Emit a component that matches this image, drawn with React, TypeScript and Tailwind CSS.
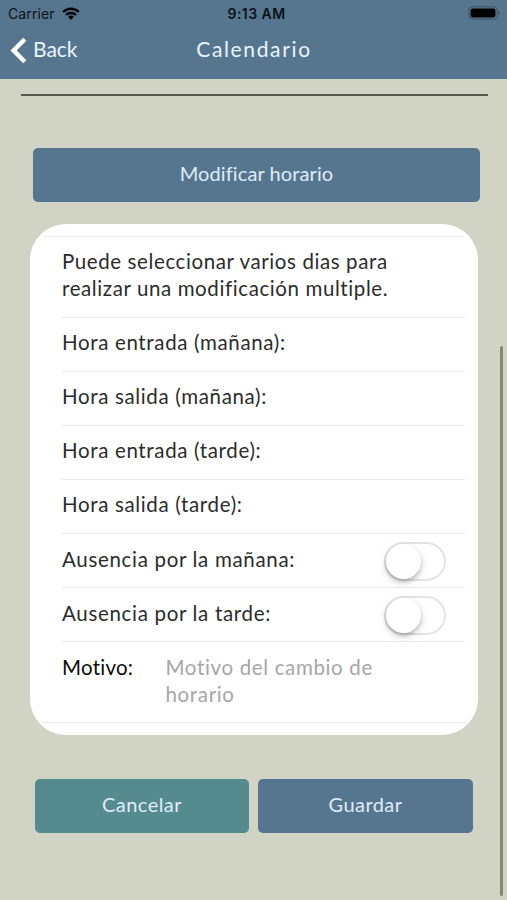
import { useState } from "react";

const timeRows = [
      "Hora entrada (mañana):",
      "Hora salida (mañana):",
      "Hora entrada (tarde):",
      "Hora salida (tarde):",
];

export default function App() {
      const [absentMorning, setAbsentMorning] = useState(false);
      const [absentEvening, setAbsentEvening] = useState(false);
      const [reason, setReason] = useState("");

      return (
            <div className="relative flex h-[900px] w-[507px] flex-col overflow-hidden bg-[#d1d4c5] font-['Lato',sans-serif] text-[20.5px] text-[#2c2c2c]">
                  <Header />

                  <main className="flex flex-col">
                        <div className="mt-[15px] mr-[19px] ml-[21px] h-[2px] bg-[#56574c]" />

                        <button className="mt-[52px] mr-[27px] ml-[33px] h-[54px] rounded-[5px] bg-[#567690] pb-[5px] text-[20px] tracking-[0.1px] text-[#dfecf8]">
                              Modificar horario
                        </button>

                        {/* Form card */}
                        <form className="mt-[22px] mr-[29px] ml-[30px] flex h-[511px] flex-col rounded-[36px] bg-white pt-3" onSubmit={(e) => e.preventDefault()}>
                              <div className="mr-[14px] ml-[14px] h-px bg-[#ededed]" />
                              <div className="mr-[13px] ml-8 flex flex-col">
                                    <p className="h-[81px] border-b border-[#e9e9e9] pt-[11px] leading-[27px] tracking-[0.6px]">
                                          Puede seleccionar varios dias para
                                          <br />
                                          realizar una modificación multiple.
                                    </p>
                                    {timeRows.map((label) => (
                                          <div key={label} className="h-[54px] border-b border-[#e9e9e9] pt-[11px] leading-[27px] tracking-[0.65px]">
                                                {label}
                                          </div>
                                    ))}
                                    <SwitchRow label="Ausencia por la mañana:" checked={absentMorning} onChange={setAbsentMorning} />
                                    <SwitchRow label="Ausencia por la tarde:" checked={absentEvening} onChange={setAbsentEvening} />
                                    <label className="flex h-[80px] pt-[12px] leading-[27px]">
                                          <span className="w-[103.5px] shrink-0 tracking-[0.25px] text-[#0c0c0c]">Motivo:</span>
                                          <textarea
                                                value={reason}
                                                onChange={(e) => setReason(e.target.value)}
                                                placeholder="Motivo del cambio de horario"
                                                className="h-[60px] w-[250px] resize-none leading-[27px] tracking-[0.65px] outline-none placeholder:text-[#a6a6a6]"
                                          />
                                    </label>
                              </div>
                              <div className="mr-[12px] ml-[12px] h-px bg-[#e9e9e9]" />
                        </form>

                        <div className="mt-[44px] mr-[34px] ml-[35px] flex gap-[9px] text-[20px] tracking-[0.45px] text-[#dfecf8]">
                              <button className="h-[54px] w-[214px] rounded-[5px] bg-[#558b8f] pb-[5px]">Cancelar</button>
                              <button className="h-[54px] w-[215px] rounded-[5px] bg-[#567690] pb-[5px]">Guardar</button>
                        </div>
                  </main>

                  {/* Scroll indicator */}
                  <div className="absolute top-[346px] right-[4px] h-[550px] w-[3px] rounded-full bg-[#85877d]" />
            </div>
      );
}

const Header = () => (
      <header className="h-[79px] shrink-0 bg-[#567690]">
            <div className="grid h-[27px] grid-cols-3 items-center pr-[7px] pl-[8px] font-['Inter',sans-serif] text-[14px] leading-[27px] text-[#0b1219]">
                  <div className="flex items-center gap-[7px]">
                        <span className="tracking-[0.1px]">Carrier</span>
                        <svg width="18" height="13" viewBox="0 0 18 13" className="-mt-[1px] text-black">
                              <g fill="none" stroke="currentColor" strokeWidth="2.4">
                                    <path d="M1.2 5a11 11 0 0 1 15.6 0" />
                                    <path d="M4 8a7.1 7.1 0 0 1 10 0" />
                              </g>
                              <path d="M9 12.8l-2.9-2.9a4.1 4.1 0 0 1 5.8 0z" fill="currentColor" />
                        </svg>
                  </div>
                  <span className="pl-[5px] text-center font-semibold tracking-[0.45px]">9:13 AM</span>
                  <div className="flex justify-end">
                        <svg width="33" height="14" viewBox="0 0 33 14" className="-mt-[1px]">
                              <rect x="1.8" y="0.8" width="28.4" height="12.4" rx="3.4" fill="none" stroke="#3c5367" strokeWidth="1" />
                              <rect x="3.6" y="2.6" width="24.8" height="8.8" rx="1.8" fill="#000" />
                              <path d="M31.3 5c1.6.6 1.6 3.4 0 4z" fill="#35495a" />
                        </svg>
                  </div>
            </div>
            <nav className="grid h-[52px] grid-cols-3 text-[#eaf4ff]">
                  <button className="flex items-start gap-[6px] pl-[10px] text-left">
                        <svg width="17" height="27" viewBox="0 0 17 27" className="mt-[10px]">
                              <path d="M14.8 2.2L3.6 13.5l11.2 11.3" fill="none" stroke="#fff" strokeWidth="4.4" />
                        </svg>
                        <span className="mt-[8px] text-[21px] leading-[27px]">Back</span>
                  </button>
                  <h1 className="mt-[8px] pl-[1px] text-center text-[21px] leading-[27px] tracking-[1.65px]">Calendario</h1>
            </nav>
      </header>
);

interface SwitchRowProps {
      label: string;
      checked: boolean;
      onChange: (value: boolean) => void;
}

const SwitchRow = ({ label, checked, onChange }: SwitchRowProps) => (
      <div className="flex h-[54px] justify-between border-b border-[#e9e9e9] pr-[19px]">
            <span className="pt-[12px] leading-[27px] tracking-[0.68px]">{label}</span>
            <button
                  type="button"
                  role="switch"
                  aria-checked={checked}
                  aria-label={label}
                  onClick={() => onChange(!checked)}
                  className={`mt-[8px] flex h-[39px] w-[62px] rounded-full border-2 border-[#e4e4e4] ${checked ? "justify-end bg-[#558b8f]" : "bg-white"}`}
            >
                  <span className="h-[35px] w-[35px] rounded-full bg-white shadow-[0_3px_4px_rgba(0,0,0,0.22),0_3px_12px_rgba(0,0,0,0.1)]" />
            </button>
      </div>
);
